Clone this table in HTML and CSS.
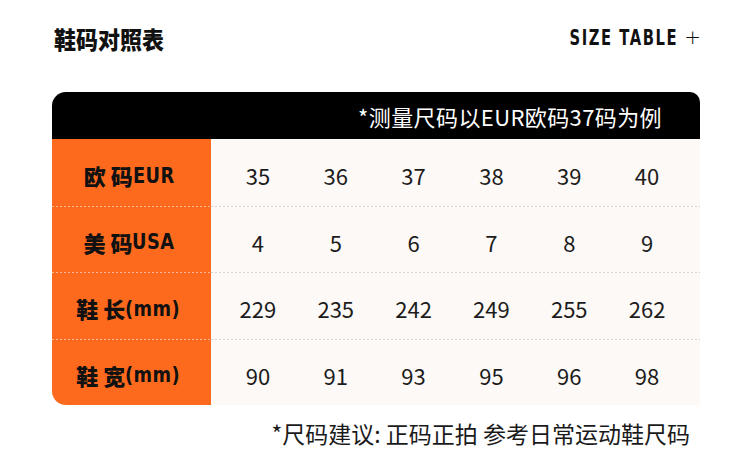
FILE: index.html
```html
<!DOCTYPE html>
<html lang="zh-CN">
<head>
<meta charset="utf-8">
<link rel="stylesheet" href="styles.css">
</head>
<body>
<div class="page">
  <header class="top">
    <h1 class="title">鞋码对照表</h1>
    <div class="tag"><span class="tag-text">SIZE TABLE</span><span class="plus">+</span></div>
  </header>
  <section class="table">
    <div class="table-head">*测量尺码以EUR欧码37码为例</div>
    <div class="row">
      <div class="label">欧 码<span class="lat">EUR</span></div>
      <div class="vals"><span>35</span><span>36</span><span>37</span><span>38</span><span>39</span><span>40</span></div>
    </div>
    <div class="row sep">
      <div class="label">美 码<span class="lat">USA</span></div>
      <div class="vals"><span>4</span><span>5</span><span>6</span><span>7</span><span>8</span><span>9</span></div>
    </div>
    <div class="row sep">
      <div class="label">鞋 长<span class="lat">(mm)</span></div>
      <div class="vals"><span>229</span><span>235</span><span>242</span><span>249</span><span>255</span><span>262</span></div>
    </div>
    <div class="row sep">
      <div class="label">鞋 宽<span class="lat">(mm)</span></div>
      <div class="vals"><span>90</span><span>91</span><span>93</span><span>95</span><span>96</span><span>98</span></div>
    </div>
  </section>
  <p class="note">*尺码建议: 正码正拍 参考日常运动鞋尺码</p>
</div>
</body>
</html>
```
FILE: styles.css
```css
* { box-sizing: border-box; }
html, body { margin: 0; padding: 0; background: #ffffff; }
body {
  font-family: "Noto Sans CJK SC", "Noto Sans", sans-serif;
  color: #1a1a1a;
}
.page { width: 750px; height: 471px; overflow: hidden; }
.top {
  height: 76px;
  display: flex;
  align-items: center;
  justify-content: space-between;
  padding: 0 49px 0 54px;
}
.title {
  margin: 0;
  font-size: 22px;
  font-weight: 900;
  line-height: 1;
  color: #111;
  transform: scaleY(1.06);
}
.tag {
  display: flex;
  align-items: center;
  gap: 8px;
  color: #111;
}
.tag-text {
  display: inline-block;
  font-family: "DejaVu Sans Condensed", sans-serif;
  font-weight: 700;
  font-size: 21px;
  letter-spacing: 2px;
  line-height: 1;
  transform: scaleX(0.78);
  transform-origin: right center;
  margin-right: -2px;
}
.plus {
  font-family: "DejaVu Sans", sans-serif;
  font-weight: 300;
  font-size: 20px;
  line-height: 1;
  margin-top: -3px;
}
.table {
  margin: 16px 50px 0 52px;
  border-radius: 14px 10px 0 14px;
  overflow: hidden;
  background: #fdf9f6;
}
.table-head {
  height: 47px;
  background: #000;
  color: #fff;
  font-size: 22px;
  letter-spacing: 0.4px;
  display: flex;
  align-items: center;
  justify-content: flex-end;
  padding-right: 38px;
  padding-top: 1px;
}
.row {
  display: flex;
  height: 66.5px;
}
.label {
  width: 159px;
  flex: none;
  background: #fe6a1d;
  display: flex;
  align-items: center;
  justify-content: center;
  padding-top: 6px;
  font-size: 22px;
  font-weight: 900;
  color: #111;
  white-space: pre;
}
.lat {
  display: inline-block;
  font-family: "DejaVu Sans Condensed", sans-serif;
  font-weight: 700;
  font-size: 22px;
  letter-spacing: 0.5px;
  transform: scaleX(0.9);
  transform-origin: left center;
}
.vals {
  flex: 1;
  display: grid;
  grid-template-columns: repeat(6, 1fr);
  padding: 6px 14px 0 8px;
  align-items: center;
  justify-items: center;
  font-size: 22px;
  font-weight: 400;
  color: #1c1c1c;
}
.sep .label {
  background-image: repeating-linear-gradient(to right, rgba(255,255,255,0.55) 0 2px, transparent 2px 4px);
  background-size: 100% 1px;
  background-repeat: no-repeat;
  background-position: top left;
}
.sep .vals {
  background-image: repeating-linear-gradient(to right, #d8d4d0 0 2px, transparent 2px 4px);
  background-size: 100% 1px;
  background-repeat: no-repeat;
  background-position: top left;
}
.note {
  margin: 14px 60px 0 0;
  text-align: right;
  font-size: 23px;
  line-height: 1.3;
  color: #1a1a1a;
}
```
